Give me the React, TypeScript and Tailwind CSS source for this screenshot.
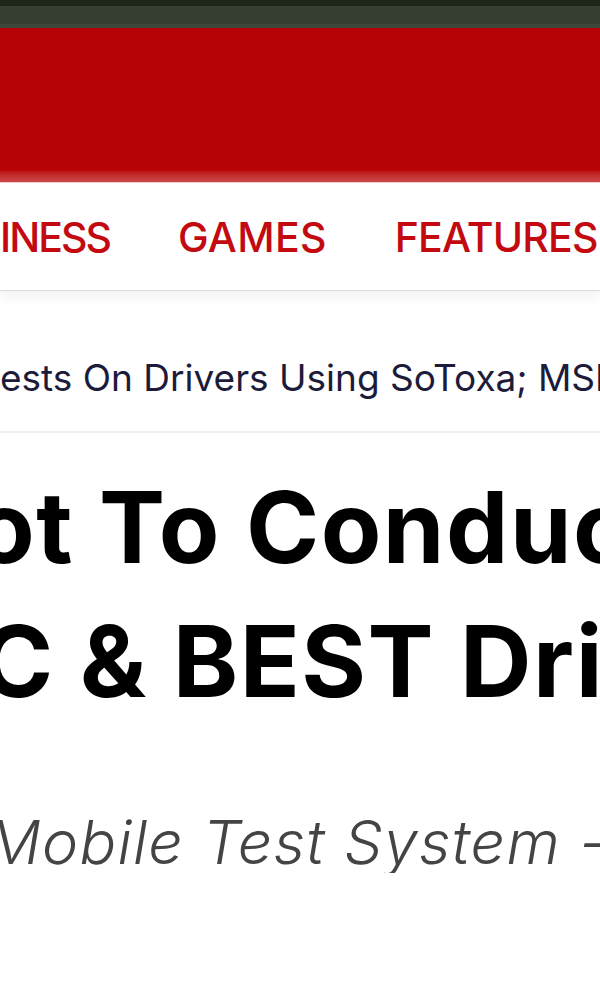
import React from 'react';

const sans = "font-['Inter','Liberation_Sans',sans-serif]";

export default function App() {
  return (
    <div className={`w-[600px] h-[1000px] overflow-hidden bg-white ${sans}`}>
      {/* top bar */}
      <div className="h-[6px] bg-[#1d2518]" />
      <div className="h-[18px] bg-[#353e2f]" />
      <div className="h-[4px] bg-[#3e483a]" />

      {/* red masthead */}
      <div className="h-[142px] bg-[#b80306]" />
      <div className="h-[12px] bg-gradient-to-b from-[#b80306] to-[#cf4a4c]" />

      {/* nav */}
      <nav className="relative z-10 h-[109px] bg-white border-t border-[#f0c8c8] border-b border-b-[#dcdcdc] shadow-[0_4px_14px_rgba(0,0,0,0.07)] flex items-center overflow-hidden">
        <ul className="flex items-center gap-[68px] whitespace-nowrap text-[41px] font-medium text-[#c20a10] leading-none pt-[2px]">
          <li className="tracking-[-2px]">INESS</li>
          <li className="tracking-[0.3px]">GAMES</li>
          <li className="tracking-[-0.8px]">FEATURES</li>
        </ul>
      </nav>

      {/* ticker / breadcrumb */}
      <div className="h-[142px] pt-[32px] border-b-2 border-[#efefef] flex items-center overflow-hidden">
        <p className="whitespace-nowrap text-[37px] text-[#1c1c3a] leading-none">
          ests On Drivers Using SoToxa; MSRTC &amp; BEST Drivers
        </p>
      </div>

      {/* headline */}
      <h1 className="mt-[27px] overflow-hidden whitespace-nowrap text-[99px] font-bold leading-[134px] text-black tracking-[1.5px]">
        <span className="block -ml-[26px]">ot To Conduct Drug Tests</span>
        <span className="block -ml-[20px]">C &amp; BEST Drivers</span>
      </h1>

      {/* subtitle */}
      <p className="mt-[84px] overflow-hidden whitespace-nowrap text-[61px] italic font-light leading-none text-[#444444] tracking-[1.2px]">
        <span className="block -ml-[14px]">Mobile Test System - SoToxa</span>
      </p>
    </div>
  );
}
